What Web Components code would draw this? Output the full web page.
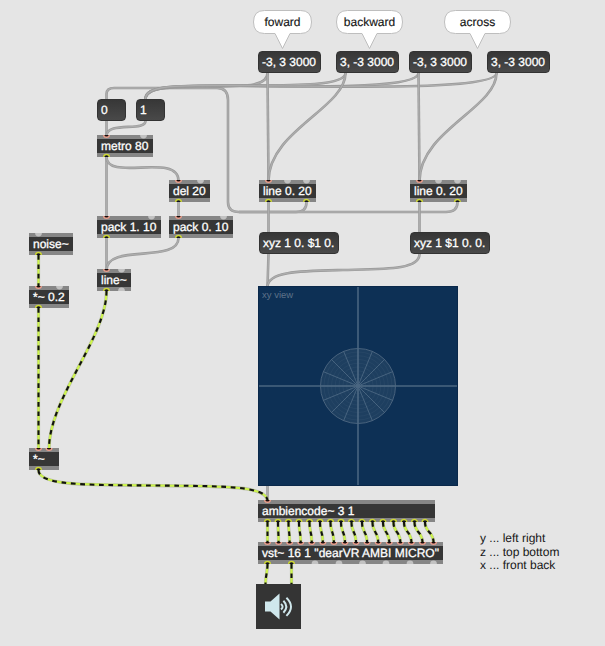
<!DOCTYPE html>
<html lang="en">
<head>
<meta charset="utf-8">
<title>Ambisonic patch</title>
<style>
html, body { margin: 0; height: 100%; overflow: hidden; background: #e5e5e5; }
body { font: 12px/14px "Liberation Sans", Arial, sans-serif; color: #161616; text-rendering: geometricPrecision; }
</style>
</head>
<body>
<patch-canvas></patch-canvas>
<script>
const place = (el, names) => {
  for (const n of names) {
    const v = el.getAttribute(n);
    if (v === null) continue;
    el.style[{ x: 'left', y: 'top', w: 'width', h: 'height' }[n]] = v + 'px';
  }
};
const nums = s => (s || '').split(' ').filter(Boolean);

/* Object box: in/out list port offsets; a trailing "-" marks an unconnected port. */
class PatchObject extends HTMLElement {
  connectedCallback() {
    place(this, ['x', 'y', 'w']);
    const w = +this.getAttribute('w');
    const port = (s, top) => {
      const idle = s.endsWith('-'), x = parseFloat(s);
      if (idle) return top
        ? `<path d="M${x - 3.4} 0A3.4 3.4 0 0 0 ${x + 3.4} 0Z" fill="#c2c2c2"/>`
        : `<path d="M${x - 3.4} 22A3.4 3.4 0 0 1 ${x + 3.4} 22Z" fill="#c2c2c2"/>`;
      return top
        ? `<path d="M${x - 2.8} 0A2.8 2.3 0 0 0 ${x + 2.8} 0" fill="#160a0a" stroke="#eda08e" stroke-width="1.4"/>`
        : `<path d="M${x - 2.8} 22A2.8 2.5 0 0 1 ${x + 2.8} 22" fill="#101020" stroke="#ced835" stroke-width="1.4"/>`;
    };
    this.attachShadow({ mode: 'open' }).innerHTML = `
      <style>
        :host { position: absolute; display: flex; align-items: center; box-sizing: border-box; height: 22px;
          padding-left: 4px; background: #363636; border: solid #868686; border-width: 4px 0;
          color: #fff; white-space: pre; -webkit-text-stroke: .3px #fff; }
        svg { position: absolute; left: 0; top: -4px; -webkit-text-stroke: 0; }
      </style>
      <svg width="${w}" height="22">${nums(this.getAttribute('in')).map(s => port(s, true)).join('')}${nums(this.getAttribute('out')).map(s => port(s, false)).join('')}</svg>
      <slot></slot>`;
  }
}

class PatchMessage extends HTMLElement {
  connectedCallback() {
    place(this, ['x', 'y', 'w']);
    this.attachShadow({ mode: 'open' }).innerHTML = `
      <style>
        :host { position: absolute; display: flex; align-items: center; box-sizing: border-box; height: 22px;
          padding-left: 3px; border-radius: 4px; background: linear-gradient(#373737, #494949);
          border: 1px solid #333; color: #fff; white-space: pre; -webkit-text-stroke: .3px #fff; }
      </style><slot></slot>`;
  }
}

class SpeechBubble extends HTMLElement {
  connectedCallback() {
    place(this, ['x', 'y', 'w']);
    const w = +this.getAttribute('w'), c = +this.getAttribute('tip'), r = w - .5;
    this.attachShadow({ mode: 'open' }).innerHTML = `
      <style>
        :host { position: absolute; display: flex; justify-content: center; height: 40px; color: #161616; }
        svg { position: absolute; left: 0; top: 0; }
        span { position: relative; padding-top: 5px; white-space: pre; -webkit-text-stroke: .15px #161616; }
      </style>
      <svg width="${w}" height="40"><path d="M11.5 .5H${r - 11}Q${r} .5 ${r} 12T${r - 11} 23.5H${c + 7.5}L${c} 38.5L${c - 7.5} 23.5H11.5Q.5 23.5 .5 12T11.5 .5Z" fill="#fff" stroke="#bebebe"/></svg>
      <span><slot></slot></span>`;
  }
}

class PatchComment extends HTMLElement {
  connectedCallback() {
    place(this, ['x', 'y']);
    this.attachShadow({ mode: 'open' }).innerHTML = `
      <style>:host { position: absolute; display: flex; flex-direction: column; white-space: pre; line-height: 13.7px; }</style>
      <slot></slot>`;
  }
}

class XyView extends HTMLElement {
  connectedCallback() {
    place(this, ['x', 'y']);
    let s = '';
    for (let i = 0; i < 16; i++) {
      const a = i * Math.PI / 8;
      s += `<path d="M100 100L${100 + 37.5 * Math.cos(a)} ${100 + 37.5 * Math.sin(a)}"/>`;
    }
    let rings = '';
    for (let r = 4; r < 37; r += 3.75) rings += `<circle cx="100" cy="100" r="${r}"/>`;
    this.attachShadow({ mode: 'open' }).innerHTML = `
      <style>
        :host { position: absolute; display: block; width: 200px; height: 200px; background: #0d3055; }
        svg { position: absolute; inset: 0; }
        span { position: relative; display: block; padding: 3px 0 0 4px; font-size: 9.5px; color: #5d7289; }
      </style>
      <svg width="200" height="200" fill="none">
        <circle cx="100" cy="100" r="37.5" fill="#d8e0d0" fill-opacity=".09" stroke="#48627d"/>
        <g stroke="#fff" stroke-opacity=".035">${rings}</g>
        <g stroke="#8ba0b5" stroke-opacity=".36">${s}</g>
        <path d="M100 0V200M0 100H200" stroke="#496580" stroke-width="1.6"/>
        <rect x=".5" y=".5" width="199" height="199" stroke="#0a284a"/>
      </svg><span><slot></slot></span>`;
  }
}

class DacToggle extends HTMLElement {
  connectedCallback() {
    place(this, ['x', 'y']);
    this.attachShadow({ mode: 'open' }).innerHTML = `
      <style>:host { position: absolute; display: block; width: 45px; height: 45px; background: #343434; }</style>
      <svg width="45" height="45" fill="none" stroke="#cfe7ec" stroke-width="2" stroke-linecap="butt">
        <path d="M9 17.5H14.5L23.5 9.5V35.5L14.5 27.5H9Z" fill="#cfe7ec" stroke="none"/>
        <path d="M25 20Q28.2 22.7 25 25.6M27.4 16.8Q33.2 22.7 27.4 28.8M30.4 13.7Q39.6 22.7 30.4 31.9"/>
      </svg>`;
  }
}

class PatchCords extends HTMLElement {
  connectedCallback() {
    const control = [
      'M106.5 99V94Q106.5 88 114 88H217Q228 88 228 100V202Q228 212 239 212H296Q306.5 212 306.5 202',
      'M239 212H446Q457.5 212 457.5 202',
      'M106.5 121V136', 'M145.5 121C145.5 132 106.5 121 106.5 136',
      'M145.5 99C145.5 88 165 87 205 86.5S267.5 87 267.5 73',
      'M145.5 99C145.5 86 175 85.5 235 85.5S345.5 86 345.5 73',
      'M145.5 99C145.5 86 170 85.5 240 86S418.5 89 418.5 73',
      'M145.5 99C145.5 86 170 85 240 85.5S496.5 92 496.5 73',
      'M267.5 73L268.5 181', 'M345.5 73C345.5 108 268.5 131 268.5 181',
      'M418.5 73L419.5 181', 'M496.5 73C496.5 108 419.5 131 419.5 181',
      'M106.5 157V217', 'M106.5 157C106.5 182 178.5 152 178.5 181',
      'M178.5 202V217', 'M106.5 238V270', 'M178.5 238C178.5 264 106.5 243 106.5 270',
      'M268.5 202V254L267.5 287', 'M419.5 202V254C419.5 270 385 269 343 270S267.5 271 267.5 287',
      'M267.5 486V501'
    ];
    const signal = [
      'M38.5 255V287', 'M38.5 308V449',
      'M106.5 291C106.5 338 49 398 49 449',
      'M38.5 470C38.5 485 80 485 153 485.5S267.5 486 267.5 501',
      'M267.5 564C267.5 572 265.5 576 265.5 584', 'M291.5 564V584'
    ];
    for (let i = 0; i < 16; i++) {
      const a = 267.5 + i * 10.5, b = 267.5 + i * 11.07;
      signal.push(`M${a} 522C${a} 533 ${b} 531 ${b} 543`);
    }
    const each = (list, st, w, extra = '') =>
      list.map(d => `<path d="${d}" stroke="${st}" stroke-width="${w}" ${extra}/>`).join('');
    this.attachShadow({ mode: 'open' }).innerHTML = `
      <style>:host { position: absolute; inset: 0; display: block; }</style>
      <svg width="605" height="646" fill="none">
        ${control.map(d => each([d], '#999', 2.6) + each([d], '#adadad', 1.3)).join('')}
        ${each(signal, '#b9bea5', 3.2)}${each(signal, '#cdf54b', 2.1)}${each(signal, '#111', 2.1, 'stroke-dasharray="4.7 4.7"')}
      </svg>`;
  }
}

class PatchCanvas extends HTMLElement {
  connectedCallback() {
    const outs = Array.from({ length: 16 }, (_, i) => 9.5 + i * 10.5).join(' ');
    const ins = Array.from({ length: 16 }, (_, i) => (9.5 + i * 11.07).toFixed(2)).join(' ');
    this.attachShadow({ mode: 'open' }).innerHTML = `
      <style>:host { position: relative; display: block; width: 605px; height: 646px; background: #e5e5e5; overflow: hidden; }</style>
      <patch-cords></patch-cords>
      <speech-bubble x="253" y="10" w="59" tip="29.5">foward</speech-bubble>
      <speech-bubble x="336" y="10" w="67" tip="33.5">backward</speech-bubble>
      <speech-bubble x="444" y="10" w="67" tip="33.5">across</speech-bubble>
      <patch-message x="258" y="51" w="63">-3, 3 3000</patch-message>
      <patch-message x="336" y="51" w="63">3, -3 3000</patch-message>
      <patch-message x="409" y="51" w="63">-3, 3 3000</patch-message>
      <patch-message x="487" y="51" w="63">3, -3 3000</patch-message>
      <patch-message x="97" y="99" w="29">0</patch-message>
      <patch-message x="136" y="99" w="29">1</patch-message>
      <patch-message x="259" y="232" w="80">xyz 1 0. $1 0.</patch-message>
      <patch-message x="410" y="232" w="80">xyz 1 $1 0. 0.</patch-message>
      <patch-object x="97" y="135" w="56" in="9.5 46.5-" out="9.5">metro 80</patch-object>
      <patch-object x="169" y="180" w="41" in="9.5 31.5-" out="9.5">del 20</patch-object>
      <patch-object x="97" y="216" w="64" in="9.5 54.5-" out="9.5">pack 1. 10</patch-object>
      <patch-object x="169" y="216" w="64" in="9.5 54.5-" out="9.5">pack 0. 10</patch-object>
      <patch-object x="97" y="269" w="34" in="9.5 24.5-" out="9.5 24.5-">line~</patch-object>
      <patch-object x="259" y="180" w="57" in="9.5 28.5- 47.5-" out="9.5 47.5">line 0. 20</patch-object>
      <patch-object x="410" y="180" w="57" in="9.5 28.5- 47.5-" out="9.5 47.5">line 0. 20</patch-object>
      <patch-object x="29" y="233" w="44" in="9.5-" out="9.5">noise~</patch-object>
      <patch-object x="29" y="286" w="40" in="9.5 30.5-" out="9.5">*~ 0.2</patch-object>
      <patch-object x="29" y="448" w="30" in="9.5 20" out="9.5">*~</patch-object>
      <xy-view x="258" y="286">xy view</xy-view>
      <patch-object x="258" y="500" w="177" in="9.5" out="${outs}">ambiencode~ 3 1</patch-object>
      <patch-object x="258" y="542" w="185" in="${ins}" out="9.5 33.5 57- 81- 104.5- 128- 152- 175.5-">vst~ 16 1 "dearVR AMBI MICRO"</patch-object>
      <dac-toggle x="256" y="584"></dac-toggle>
      <patch-comment x="480" y="532"><span>y ... left right</span><span>z ... top bottom</span><span>x ... front back</span></patch-comment>`;
  }
}

customElements.define('patch-object', PatchObject);
customElements.define('patch-message', PatchMessage);
customElements.define('speech-bubble', SpeechBubble);
customElements.define('patch-comment', PatchComment);
customElements.define('xy-view', XyView);
customElements.define('dac-toggle', DacToggle);
customElements.define('patch-cords', PatchCords);
customElements.define('patch-canvas', PatchCanvas);
</script>
</body>
</html>
